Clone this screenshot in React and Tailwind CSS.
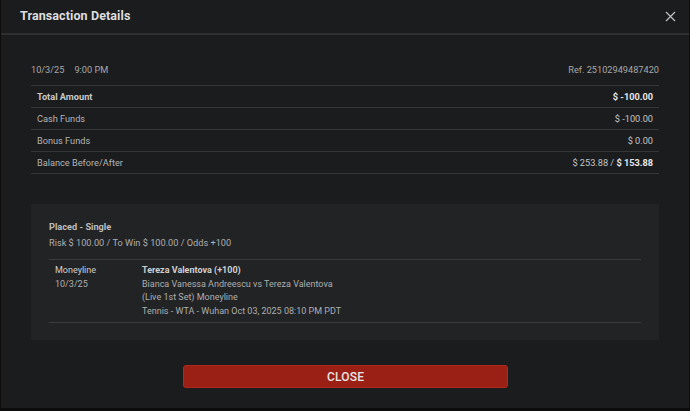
import React from "react";

const rows = [
  { label: "Total Amount", value: "$ -100.00", bold: true },
  { label: "Cash Funds", value: "$ -100.00" },
  { label: "Bonus Funds", value: "$ 0.00" },
];

export default function App() {
  return (
    <div
      className="w-[690px] h-[411px] bg-[#0d0d0e] overflow-hidden"
      style={{ fontFamily: "Roboto, 'Liberation Sans', sans-serif" }}
    >
      <div className="ml-[1px] w-[688px] h-[408px] bg-[#1b1c1e] flex flex-col">
        {/* header */}
        <div className="h-[35px] flex items-center justify-between pl-[19px] pr-[13px] border-b-2 border-[#2e2f31]">
          <h2 className="text-[12.5px] font-bold text-[#dedede] tracking-[0.1px]">Transaction Details</h2>
          <button className="text-[#bdbdbd]">
            <svg width="11" height="11" viewBox="0 0 11 11">
              <path d="M1 1L10 10M10 1L1 10" stroke="currentColor" strokeWidth="1.3" />
            </svg>
          </button>
        </div>

        <div className="px-[30px]">
          {/* date / ref */}
          <div className="mt-[28px] h-[14px] flex items-center justify-between text-[9.2px] text-[#a8a8a8]">
            <span>
              10/3/25<span className="ml-[10px]">9:00 PM</span>
            </span>
            <span>Ref. 25102949487420</span>
          </div>

          {/* amounts table */}
          <div className="mt-[8px] border-t border-[#353638]">
            {rows.map((r) => (
              <div
                key={r.label}
                className="h-[22px] flex items-center justify-between px-[6px] border-b border-[#353638] text-[9.2px]"
              >
                <span className={r.bold ? "font-bold text-[#c8c8c8]" : "text-[#b4b4b4]"}>{r.label}</span>
                <span className={r.bold ? "font-bold text-[#e8e8e8]" : "text-[#c4c4c4]"}>{r.value}</span>
              </div>
            ))}
            <div className="h-[22px] flex items-center justify-between px-[6px] border-b border-[#353638] text-[9.2px]">
              <span className="text-[#b4b4b4]">Balance Before/After</span>
              <span className="text-[#c4c4c4]">
                $ 253.88 / <span className="font-bold text-[#e8e8e8]">$ 153.88</span>
              </span>
            </div>
          </div>

          {/* bet card */}
          <div className="mt-[30px] h-[136px] bg-[#222325] pt-[16px] pl-[18px] pr-[18px]">
            <div className="text-[9.2px] font-bold text-[#bdbdbd] leading-[14px]">Placed - Single</div>
            <div className="mt-[2px] text-[9.2px] text-[#aeaeae] leading-[14px]">
              Risk $ 100.00 / To Win $ 100.00 / Odds +100
            </div>
            <div className="mt-[9px] border-t border-b border-[#3a3b3d] pt-[4px] pb-[4px] pl-[6px] flex text-[9px] leading-[13.6px]">
              <div className="w-[87px]">
                <div className="text-[#cfcfcf]">Moneyline</div>
                <div className="text-[#aeaeae]">10/3/25</div>
              </div>
              <div>
                <div className="font-bold text-[#cfcfcf]">Tereza Valentova (+100)</div>
                <div className="text-[#aeaeae]">Bianca Vanessa Andreescu vs Tereza Valentova</div>
                <div className="text-[#aeaeae]">(Live 1st Set) Moneyline</div>
                <div className="text-[#aeaeae]">Tennis - WTA - Wuhan Oct 03, 2025 08:10 PM PDT</div>
              </div>
            </div>
          </div>
        </div>

        {/* footer */}
        <div className="mt-[25px] flex justify-center">
          <button className="w-[325px] h-[23px] ml-[1px] rounded-[3px] bg-[#9a1f14] border border-[#b0291c] text-[12px] font-medium text-[#e6e6e6] tracking-[0.2px]">
            CLOSE
          </button>
        </div>
      </div>
    </div>
  );
}
